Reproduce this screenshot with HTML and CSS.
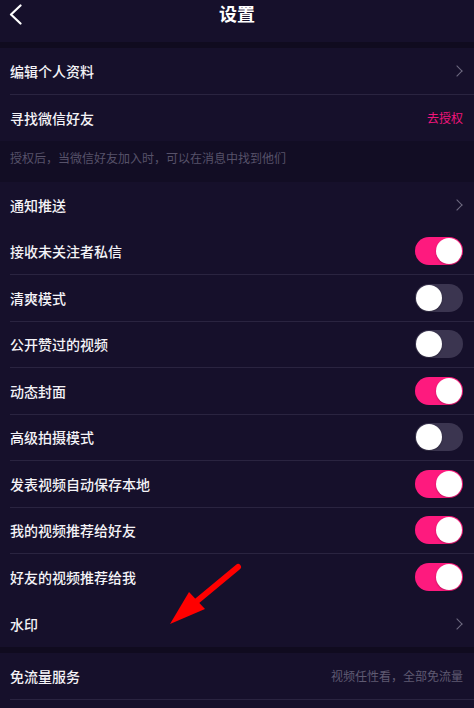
FILE: index.html
```html
<!DOCTYPE html>
<html lang="zh-CN">
  <head>
    <meta charset="utf-8">
    <title>设置</title>
    <link rel="stylesheet" href="styles.css">
  </head>
  <body>

  <div class="header">
    <svg class="back" width="14" height="22" viewBox="0 0 14 22">
      <polyline points="11.5,1.5 2,10.5 11.5,19.5" fill="none" stroke="#fff" stroke-width="2.2" stroke-linecap="round" stroke-linejoin="round"/>
    </svg>
    <div class="title">设置</div>
  </div>

  <div class="gap"></div>

  <div class="section">
    <div class="row"><div class="body line"><span class="label">编辑个人资料</span><span class="arrow"></span></div></div>
    <div class="row"><div class="body"><span class="label">寻找微信好友</span><span class="link">去授权</span></div></div>
  </div>
  <div class="note">授权后，当微信好友加入时，可以在消息中找到他们</div>

  <div class="section">
    <div class="row"><div class="body"><span class="label">通知推送</span><span class="arrow"></span></div></div>
    <div class="row"><div class="body line"><span class="label">接收未关注者私信</span><span class="switch on"></span></div></div>
    <div class="row"><div class="body line"><span class="label">清爽模式</span><span class="switch"></span></div></div>
    <div class="row"><div class="body line"><span class="label">公开赞过的视频</span><span class="switch"></span></div></div>
    <div class="row"><div class="body line"><span class="label">动态封面</span><span class="switch on"></span></div></div>
    <div class="row"><div class="body line"><span class="label">高级拍摄模式</span><span class="switch"></span></div></div>
    <div class="row"><div class="body line"><span class="label">发表视频自动保存本地</span><span class="switch on"></span></div></div>
    <div class="row"><div class="body line"><span class="label">我的视频推荐给好友</span><span class="switch on"></span></div></div>
    <div class="row"><div class="body"><span class="label">好友的视频推荐给我</span><span class="switch on"></span></div></div>
    <div class="row"><div class="body"><span class="label">水印</span><span class="arrow"></span></div></div>
  </div>

  <div class="gap"></div>

  <div class="section">
    <div class="row"><div class="body line"><span class="label">免流量服务</span><span class="hint">视频任性看，全部免流量</span></div></div>
    <div class="row tail"></div>
  </div>

  <svg class="pointer" width="80" height="70" viewBox="0 0 80 70">
    <line x1="71" y1="6" x2="30" y2="40" stroke="#ff0000" stroke-width="6" stroke-linecap="round"/>
    <polygon points="3,63 22,31 38,48" fill="#ff0000"/>
  </svg>

  </body>
</html>
```

FILE: styles.css
```css
html {
  height: 100%;
}
body {
  margin: 0;
  padding: 0;
  background: #16102b;
  color: #ffffff;
  font-family: "Noto Sans CJK SC", "Noto Sans", sans-serif;
  font-size: 14px;
  height: 100%;
  overflow: hidden;
  position: relative;
}

.header {
  height: 42px;
  display: flex;
  justify-content: center;
  position: relative;
}
.header .back {
  position: absolute;
  left: 9px;
  top: 4px;
}
.title {
  font-size: 18px;
  font-weight: bold;
  line-height: 26px;
}

.gap {
  height: 6px;
  background: #100b1f;
}

.section {
  background: #16102b;
}

.row {
  height: 46.5px;
  padding-left: 10px;
  box-sizing: border-box;
  display: flex;
}
.row.tail {
  height: 8px;
}
.body {
  flex: 1;
  display: flex;
  align-items: center;
  justify-content: space-between;
  padding-right: 11px;
  box-sizing: border-box;
}
.body.line {
  border-bottom: 1px solid #2a2440;
}
.label {
  font-size: 14px;
  font-weight: 500;
  color: #f4f3f7;
}

.arrow {
  width: 7px;
  height: 7px;
  border-top: 1.5px solid #6f6a82;
  border-right: 1.5px solid #6f6a82;
  transform: rotate(45deg);
  margin-right: 2px;
}

.link {
  font-size: 12px;
  color: #f0157c;
}
.hint {
  font-size: 12px;
  color: #5f5a72;
}

.note {
  height: 41px;
  background: #120d24;
  color: #57526a;
  font-size: 12px;
  padding: 8px 10px 0;
  box-sizing: border-box;
}

.switch {
  width: 48px;
  height: 28px;
  border-radius: 14px;
  background: #3b3550;
  position: relative;
}
.switch::after {
  content: "";
  position: absolute;
  top: 1px;
  left: 1px;
  width: 26px;
  height: 26px;
  border-radius: 50%;
  background: #ffffff;
  box-shadow: 0 1px 2px rgba(0, 0, 0, 0.25);
}
.switch.on {
  background: #fe1a7e;
}
.switch.on::after {
  left: 21px;
}

.pointer {
  position: absolute;
  left: 167px;
  top: 561px;
}
```
